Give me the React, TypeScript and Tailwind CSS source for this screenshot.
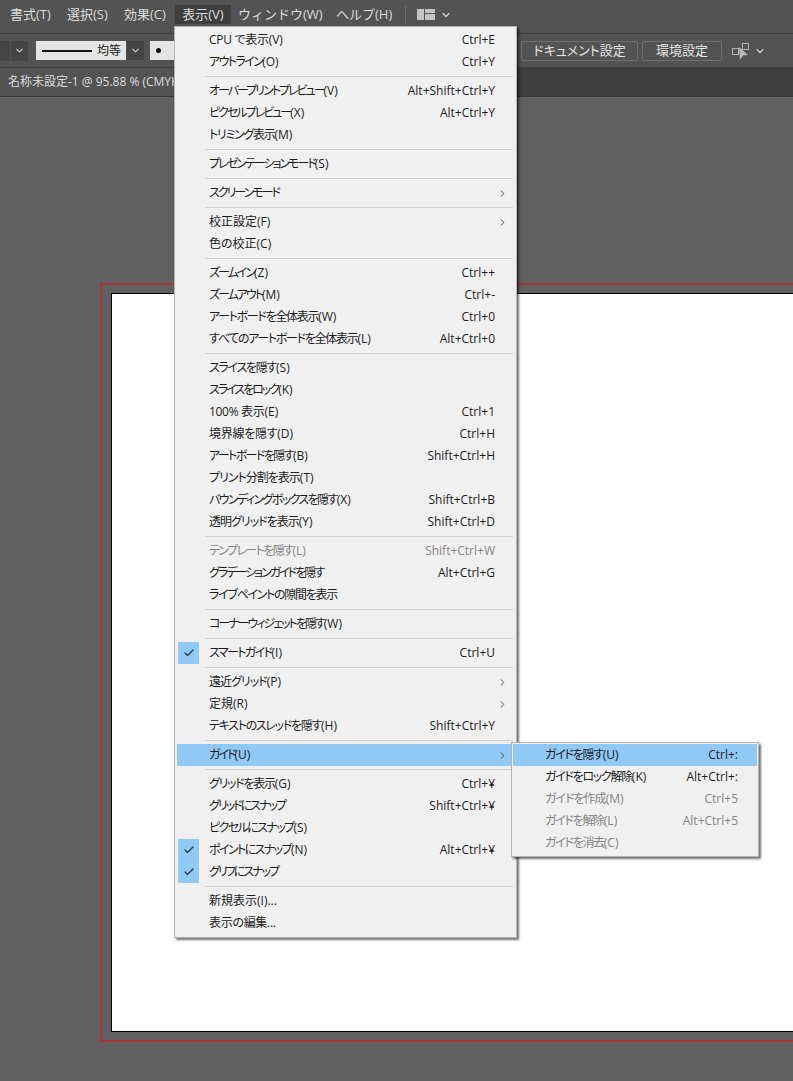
import { Check, ChevronDown, ChevronRight } from "lucide-react";

type Row = {
  label?: string;
  keys?: string;
  sub?: boolean;
  off?: boolean;
  checked?: boolean;
  active?: boolean;
  sep?: boolean;
  fit?: string;
};

// the reference's UI font has much narrower kana than Noto, so rows get tightened by how kana-heavy they are
const t1 = "tracking-[-0.3px]";
const t2 = "tracking-[-1px]";
const t3 = "tracking-[-1.3px]";
const t4 = "tracking-[-1.6px]";
const t5 = "tracking-[-2px]";

const sep: Row = { sep: true };

const viewMenu: Row[] = [
  { label: "CPU で表示(V)", keys: "Ctrl+E", fit: t1 },
  { label: "アウトライン(O)", keys: "Ctrl+Y", fit: t4 },
  sep,
  { label: "オーバープリントプレビュー(V)", keys: "Alt+Shift+Ctrl+Y", fit: t5 },
  { label: "ピクセルプレビュー(X)", keys: "Alt+Ctrl+Y", fit: t5 },
  { label: "トリミング表示(M)", fit: t3 },
  sep,
  { label: "プレゼンテーションモード(S)", fit: t5 },
  sep,
  { label: "スクリーンモード", sub: true, fit: t5 },
  sep,
  { label: "校正設定(F)", sub: true },
  { label: "色の校正(C)" },
  sep,
  { label: "ズームイン(Z)", keys: "Ctrl++", fit: t5 },
  { label: "ズームアウト(M)", keys: "Ctrl+-", fit: t5 },
  { label: "アートボードを全体表示(W)", keys: "Ctrl+0", fit: t3 },
  { label: "すべてのアートボードを全体表示(L)", keys: "Alt+Ctrl+0", fit: t3 },
  sep,
  { label: "スライスを隠す(S)", fit: t3 },
  { label: "スライスをロック(K)", fit: t5 },
  { label: "100% 表示(E)", keys: "Ctrl+1", fit: t1 },
  { label: "境界線を隠す(D)", keys: "Ctrl+H", fit: t1 },
  { label: "アートボードを隠す(B)", keys: "Shift+Ctrl+H", fit: t4 },
  { label: "プリント分割を表示(T)", fit: t2 },
  { label: "バウンディングボックスを隠す(X)", keys: "Shift+Ctrl+B", fit: t4 },
  { label: "透明グリッドを表示(Y)", keys: "Shift+Ctrl+D", fit: t2 },
  sep,
  { label: "テンプレートを隠す(L)", keys: "Shift+Ctrl+W", off: true, fit: t4 },
  { label: "グラデーションガイドを隠す", keys: "Alt+Ctrl+G", fit: t5 },
  { label: "ライブペイントの隙間を表示", fit: t3 },
  sep,
  { label: "コーナーウィジェットを隠す(W)", fit: t5 },
  sep,
  { label: "スマートガイド(I)", keys: "Ctrl+U", checked: true, fit: t4 },
  sep,
  { label: "遠近グリッド(P)", sub: true, fit: t2 },
  { label: "定規(R)", sub: true },
  { label: "テキストのスレッドを隠す(H)", keys: "Shift+Ctrl+Y", fit: t3 },
  sep,
  { label: "ガイド(U)", sub: true, active: true, fit: t5 },
  sep,
  { label: "グリッドを表示(G)", keys: "Ctrl+¥", fit: t3 },
  { label: "グリッドにスナップ", keys: "Shift+Ctrl+¥", fit: t5 },
  { label: "ピクセルにスナップ(S)", fit: t4 },
  { label: "ポイントにスナップ(N)", keys: "Alt+Ctrl+¥", checked: true, fit: t4 },
  { label: "グリフにスナップ", checked: true, fit: t5 },
  sep,
  { label: "新規表示(I)..." },
  { label: "表示の編集...", fit: t1 },
];

const guideMenu: Row[] = [
  { label: "ガイドを隠す(U)", keys: "Ctrl+:", active: true, fit: t3 },
  { label: "ガイドをロック解除(K)", keys: "Alt+Ctrl+:", fit: t3 },
  { label: "ガイドを作成(M)", keys: "Ctrl+5", off: true, fit: t2 },
  { label: "ガイドを解除(L)", keys: "Alt+Ctrl+5", off: true, fit: t3 },
  { label: "ガイドを消去(C)", off: true, fit: t3 },
];

const topMenus = [
  { label: "書式(T)", width: "w-[57px]" },
  { label: "選択(S)", width: "w-[57px]" },
  { label: "効果(C)", width: "w-[51px]" },
];

// only the kana part is tightened, the "(X)" access key keeps normal spacing
function Label({ row }: { row: Row }) {
  const label = row.label ?? "";
  const cut = label.indexOf("(");
  const head = cut === -1 ? label : label.slice(0, cut);
  const tail = cut === -1 ? "" : label.slice(cut);
  return (
    <span className="whitespace-nowrap">
      <span className={row.fit}>{head}</span>
      {tail}
    </span>
  );
}

function MainRow({ row }: { row: Row }) {
  if (row.sep) {
    return (
      <div className="h-[7px] flex items-center pl-[28px] pr-px">
        <div className="h-px w-full bg-[#d2d2d2]" />
      </div>
    );
  }
  return (
    <div
      className={`h-[22px] flex items-center text-[12px] ${row.active ? "bg-[#90c8f6]" : ""} ${row.off ? "text-[#858585]" : "text-[#1c1c1c]"}`}
    >
      <div className="w-[32px] h-full flex items-center pl-px">
        {row.checked && (
          <div className="w-[21px] h-full bg-[#90c8f6] flex items-center justify-center">
            <Check size={12} strokeWidth={2.5} className="text-[#2b3a4a]" />
          </div>
        )}
      </div>
      <div className="flex-1">
        <Label row={row} />
      </div>
      {row.keys && <span className="pr-[19px]">{row.keys}</span>}
      {row.sub && (
        <ChevronRight size={11} strokeWidth={2} className="mr-[6px] text-[#444444]" />
      )}
    </div>
  );
}

function SubRow({ row }: { row: Row }) {
  return (
    <div
      className={`h-[22px] flex items-center justify-between pl-[32px] pr-[19px] text-[12px] ${row.active ? "bg-[#90c8f6]" : ""} ${row.off ? "text-[#858585]" : "text-[#1c1c1c]"}`}
    >
      <Label row={row} />
      {row.keys && <span>{row.keys}</span>}
    </div>
  );
}

export default function App() {
  return (
    <div className="relative w-[793px] h-[1081px] overflow-hidden bg-[#606060] font-['Open_Sans','Noto_Sans_CJK_JP',sans-serif]">
      {/* menu bar */}
      <div className="h-[33px] bg-[#535353] flex items-center pl-[10px] pb-[4px] text-[13px] text-[#dcdcdc]">
        {topMenus.map((m) => (
          <span key={m.label} className={`${m.width} whitespace-nowrap`}>
            {m.label}
          </span>
        ))}
        <span className="w-[56px] h-[19px] mr-[7px] bg-[#3e3e3e] flex items-center justify-center whitespace-nowrap">
          表示(V)
        </span>
        <span className="w-[98px] whitespace-nowrap">ウィンドウ(W)</span>
        <span className="w-[69px] whitespace-nowrap">ヘルプ(H)</span>
        <div className="w-px h-[17px] bg-[#707070] mr-[11px]" />
        <div className="flex gap-px">
          <div className="w-[7px] h-[11px] bg-[#c4c4c4]" />
          <div className="flex flex-col gap-px">
            <div className="w-[10px] h-[4px] bg-[#c4c4c4]" />
            <div className="w-[10px] h-[6px] bg-[#c4c4c4]" />
          </div>
        </div>
        <ChevronDown size={12} strokeWidth={2.5} className="ml-[5px] text-[#d0d0d0]" />
      </div>

      {/* control bar */}
      <div className="h-[35px] bg-[#535353] border-t border-b border-[#3f3f3f] flex items-center text-[12px] text-[#e4e4e4]">
        <div className="w-[10px] h-[20px] bg-[#454545]" />
        <div className="w-[17px] h-[20px] ml-px bg-[#454545] flex items-center justify-center">
          <ChevronDown size={11} strokeWidth={2.5} className="text-[#d0d0d0]" />
        </div>
        <div className="w-[90px] h-[19px] ml-[8px] bg-[#e4e4e4] flex items-center pl-[6px] text-[#222222]">
          <div className="w-[50px] h-[2px] bg-[#111111] mr-[5px]" />
          <span>均等</span>
        </div>
        <div className="w-[17px] h-[19px] ml-px bg-[#454545] flex items-center justify-center">
          <ChevronDown size={11} strokeWidth={2.5} className="text-[#d0d0d0]" />
        </div>
        <div className="w-[30px] h-[19px] ml-[6px] bg-[#e4e4e4] flex items-center pl-[6px]">
          <div className="w-[5px] h-[5px] rounded-full bg-[#111111]" />
        </div>
        <button className="w-[117px] h-[20px] ml-[341px] border border-[#6e6e6e] rounded-[2px] flex items-center justify-center whitespace-nowrap text-[13px] [font-feature-settings:'palt']">
          ドキュメント設定
        </button>
        <button className="w-[80px] h-[20px] ml-[4px] border border-[#6e6e6e] rounded-[2px] flex items-center justify-center whitespace-nowrap text-[13px]">
          環境設定
        </button>
        <svg width="20" height="18" viewBox="0 0 20 18" className="ml-[9px]" fill="none">
          <rect x="1.5" y="6.5" width="6" height="6" stroke="#b4b4b4" />
          <rect x="11.5" y="1.5" width="6" height="6" stroke="#b4b4b4" />
          <path d="M8 5 L17 13 L12 13.5 L9 18 Z" fill="#b8b8b8" />
        </svg>
        <ChevronDown size={12} strokeWidth={2.5} className="ml-[3px] text-[#d0d0d0]" />
      </div>

      {/* document tab */}
      <div className="h-[29px] bg-[#3f3f3f] border-b border-[#363636] flex">
        <div className="w-[190px] bg-[#535353] pl-[8px] flex items-center text-[12px] text-[#dcdcdc] whitespace-nowrap">
          名称未設定-1 @ 95.88 % (CMYK
        </div>
      </div>

      {/* canvas */}
      <div className="pt-[186px] pl-[100px]">
        <div className="w-[760px] h-[759px] border-2 border-[#a93636] pt-[8px] pl-[9px]">
          <div className="w-[760px] h-[739px] bg-white border border-black" />
        </div>
      </div>

      {/* view menu */}
      <div className="absolute left-[174px] top-[26px] w-[343px] h-[912px] bg-[#f0f0f0] border border-[#b4b4b4] pt-[2px] pl-[2px] pr-[2px] shadow-[2px_2px_2px_rgba(0,0,0,0.55)] [font-feature-settings:'palt']">
        {viewMenu.map((row, i) => (
          <MainRow key={i} row={row} />
        ))}
      </div>

      {/* guide submenu */}
      <div className="absolute left-[511px] top-[742px] w-[248px] h-[115px] bg-[#f0f0f0] border border-[#b4b4b4] p-px shadow-[2px_2px_2px_rgba(0,0,0,0.55)] [font-feature-settings:'palt']">
        {guideMenu.map((row) => (
          <SubRow key={row.label} row={row} />
        ))}
      </div>
    </div>
  );
}
